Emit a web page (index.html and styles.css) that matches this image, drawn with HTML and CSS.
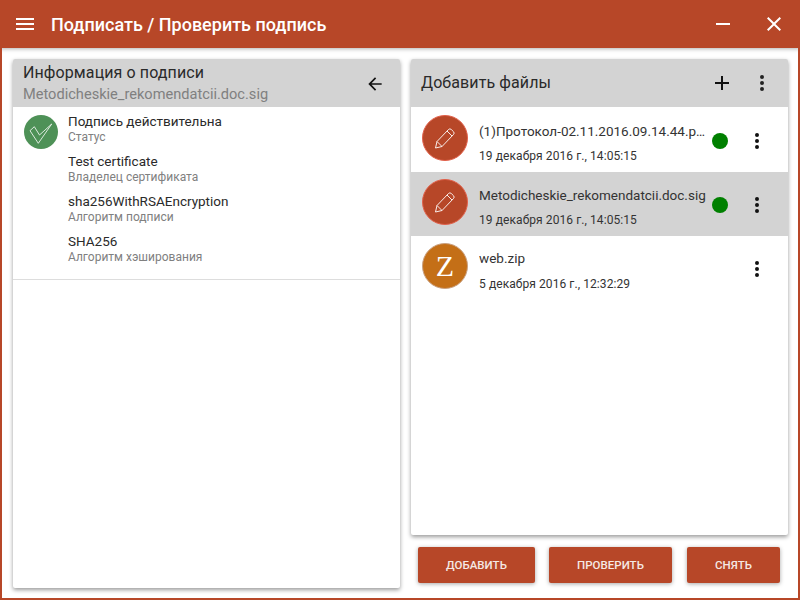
FILE: index.html
```html
<!DOCTYPE html>
<html lang="ru">
<head>
    <meta charset="UTF-8">
    <title>Подписать / Проверить подпись</title>
    <link rel="stylesheet" href="styles.css">
</head>
<body>
<div class="window">
    <header class="titlebar">
        <svg class="bar-icon menu-icon" width="24" height="24" viewBox="0 0 24 24"><path d="M3 18h18v-2H3v2zm0-5h18v-2H3v2zm0-7v2h18V6H3z"/></svg>
        <h1 class="app-title">Подписать / Проверить подпись</h1>
        <svg class="bar-icon min-icon" width="24" height="24" viewBox="0 0 24 24"><path d="M5 11h14v2H5z"/></svg>
        <svg class="bar-icon close-icon" width="24" height="24" viewBox="0 0 24 24"><path d="M19 6.400 17.600 5 12 10.600 6.400 5 5 6.400 10.600 12 5 17.600 6.400 19 12 13.400 17.600 19 19 17.600 13.400 12z"/></svg>
    </header>

    <main class="content">
        <section class="card card-left">
            <div class="card-head">
                <div class="head-text">
                    <div class="head-title">Информация о подписи</div>
                    <div class="head-sub">Metodicheskie_rekomendatcii.doc.sig</div>
                </div>
                <svg class="back-icon" width="20" height="20" viewBox="0 0 24 24"><path d="M20 11H7.800l5.600-5.600L12 4l-8 8 8 8 1.400-1.400L7.800 13H20z"/></svg>
            </div>
            <div class="info">
                <div class="info-row">
                    <div class="status-icon">
                        <svg width="34" height="34" viewBox="0 0 34 34"><path d="M6 15.700l4.300-4 5.200 8.300L27.700 9 14.300 28.300z" fill="none" stroke="#fff" stroke-width="0.800"/></svg>
                    </div>
                    <div class="info-title">Подпись действительна</div>
                    <div class="info-sub">Статус</div>
                </div>
                <div class="info-row">
                    <div class="info-title">Test certificate</div>
                    <div class="info-sub">Владелец сертификата</div>
                </div>
                <div class="info-row">
                    <div class="info-title">sha256WithRSAEncryption</div>
                    <div class="info-sub">Алгоритм подписи</div>
                </div>
                <div class="info-row">
                    <div class="info-title">SHA256</div>
                    <div class="info-sub">Алгоритм хэширования</div>
                </div>
            </div>
        </section>

        <div class="right-col">
            <section class="card card-right">
                <div class="card-head files-head">
                    <div class="head-title">Добавить файлы</div>
                    <svg class="head-plus" width="24" height="24" viewBox="0 0 24 24"><path d="M19 13h-6v6h-2v-6H5v-2h6V5h2v6h6z"/></svg>
                    <svg class="head-more" width="24" height="24" viewBox="0 0 24 24"><path d="M12 8a2 2 0 1 0 0-4 2 2 0 0 0 0 4zm0 2a2 2 0 1 0 0 4 2 2 0 0 0 0-4zm0 6a2 2 0 1 0 0 4 2 2 0 0 0 0-4z"/></svg>
                </div>
                <div class="files">
                    <div class="file">
                        <div class="avatar avatar-sign">
                            <svg width="26" height="26" viewBox="0 0 26 26"><path d="M3.500 23l1.500-6.500L16.500 4.500a2 2 0 0 1 2.800 0l2.200 2.200a2 2 0 0 1 0 2.800L10 21.500zM5 16.500l5 5M15 6l5 5" fill="none" stroke="#fff" stroke-width="0.900"/></svg>
                        </div>
                        <div class="file-text">
                            <div class="file-name">(1)Протокол-02.11.2016.09.14.44.pdf.sig</div>
                            <div class="file-date">19 декабря 2016 г., 14:05:15</div>
                        </div>
                        <div class="dot"></div>
                        <svg class="file-more" width="24" height="24" viewBox="0 0 24 24"><path d="M12 8a2 2 0 1 0 0-4 2 2 0 0 0 0 4zm0 2a2 2 0 1 0 0 4 2 2 0 0 0 0-4zm0 6a2 2 0 1 0 0 4 2 2 0 0 0 0-4z"/></svg>
                    </div>
                    <div class="file file-selected">
                        <div class="avatar avatar-sign">
                            <svg width="26" height="26" viewBox="0 0 26 26"><path d="M3.500 23l1.500-6.500L16.500 4.500a2 2 0 0 1 2.800 0l2.200 2.200a2 2 0 0 1 0 2.800L10 21.500zM5 16.500l5 5M15 6l5 5" fill="none" stroke="#fff" stroke-width="0.900"/></svg>
                        </div>
                        <div class="file-text">
                            <div class="file-name">Metodicheskie_rekomendatcii.doc.sig</div>
                            <div class="file-date">19 декабря 2016 г., 14:05:15</div>
                        </div>
                        <div class="dot"></div>
                        <svg class="file-more" width="24" height="24" viewBox="0 0 24 24"><path d="M12 8a2 2 0 1 0 0-4 2 2 0 0 0 0 4zm0 2a2 2 0 1 0 0 4 2 2 0 0 0 0-4zm0 6a2 2 0 1 0 0 4 2 2 0 0 0 0-4z"/></svg>
                    </div>
                    <div class="file">
                        <div class="avatar avatar-zip">Z</div>
                        <div class="file-text">
                            <div class="file-name file-name-short">web.zip</div>
                            <div class="file-date">5 декабря 2016 г., 12:32:29</div>
                        </div>
                        <div class="dot dot-none"></div>
                        <svg class="file-more" width="24" height="24" viewBox="0 0 24 24"><path d="M12 8a2 2 0 1 0 0-4 2 2 0 0 0 0 4zm0 2a2 2 0 1 0 0 4 2 2 0 0 0 0-4zm0 6a2 2 0 1 0 0 4 2 2 0 0 0 0-4z"/></svg>
                    </div>
                </div>
            </section>
            <div class="actions">
                <button class="btn btn-add">Добавить</button>
                <button class="btn btn-verify">Проверить</button>
                <button class="btn btn-remove">Снять</button>
            </div>
        </div>
    </main>
</div>
</body>
</html>
```

FILE: styles.css
```css
* {
    box-sizing: border-box;
}
html, body {
    margin: 0;
    height: 100%;
}
body {
    font-family: Roboto, "Liberation Sans", sans-serif;
    background: #fff;
    color: #212121;
}
.window {
    width: 800px;
    height: 600px;
    display: flex;
    flex-direction: column;
    border: 2px solid #b74728;
    border-top: 0;
    overflow: hidden;
}

/* top bar */
.titlebar {
    height: 48px;
    flex: none;
    margin: 0 -2px;
    padding: 0 14px 0 13px;
    display: flex;
    align-items: center;
    background: #b74728;
    color: #fff;
    box-shadow: 0 1px 4px rgba(0, 0, 0, .3);
    position: relative;
}
.bar-icon {
    fill: #fff;
    flex: none;
}
.app-title {
    margin: 0 0 0 14px;
    flex: 1;
    font-size: 18px;
    font-weight: 500;
}
.min-icon {
    margin-right: 27px;
}

.content {
    flex: 1;
    display: flex;
    gap: 11px;
    padding: 11px 10px 10px 11px;
    min-height: 0;
}
.card {
    background: #fff;
    box-shadow: 0 2px 4px rgba(0, 0, 0, .4);
    border-radius: 2px;
}
.card-left {
    width: 387px;
    flex: none;
}
.right-col {
    flex: 1;
    display: flex;
    flex-direction: column;
}
.card-right {
    flex: 1;
}

.card-head {
    height: 48px;
    display: flex;
    align-items: center;
    background: #d3d3d3;
    padding: 0 13px 0 10px;
    border-radius: 2px 2px 0 0;
}
.head-text {
    flex: 1;
}
.head-title {
    font-size: 16px;
    line-height: 20px;
    letter-spacing: .1px;
    color: #2a2a2a;
}
.head-sub {
    font-size: 14.600px;
    line-height: 20px;
    margin-top: 1px;
    color: #808080;
}
.files-head {
    padding-right: 14px;
}
.files-head .head-title {
    flex: 1;
}
.head-plus {
    margin-right: 16px;
    fill: #111;
}
.head-more {
    fill: #222;
}
.back-icon {
    fill: #111;
    margin: 2px 2px 0 0;
}

/* signature info */
.info {
    height: 173px;
    padding: 3px 0 0 55px;
    border-bottom: 1px solid #ddd;
}
.info-row {
    height: 40px;
    position: relative;
    padding-top: 2px;
}
.status-icon {
    position: absolute;
    left: -44px;
    top: 5px;
    width: 34px;
    height: 34px;
    border-radius: 50%;
    background: #4e9157;
}
.status-icon svg {
    display: block;
}
.info-title {
    font-size: 13.500px;
    line-height: 18px;
    color: #2a2a2a;
}
.info-sub {
    font-size: 12px;
    line-height: 14px;
    color: #808080;
}

/* file list */
.files {
    padding-top: 1px;
}
.file {
    height: 64px;
    display: flex;
    align-items: flex-start;
    padding: 0 19px 0 11px;
}
.file-selected {
    background: #d3d3d3;
}
.avatar {
    width: 46px;
    height: 46px;
    border-radius: 50%;
    flex: none;
    display: flex;
    align-items: center;
    justify-content: center;
    margin: 7px 11px 0 0;
}
.avatar-sign {
    background: #b74728;
    border: 1px solid #e2604a;
}
.avatar-zip {
    background: #c46f17;
    border: 1px solid #c9a080;
    color: #fff;
    font-family: "Liberation Serif", serif;
    font-size: 30px;
}
.file-text {
    flex: none;
    width: 233px;
    padding-right: 5px;
    min-width: 0;
}
.file-name {
    font-size: 13.500px;
    line-height: 18px;
    white-space: nowrap;
    overflow: hidden;
    text-overflow: ellipsis;
    color: #333;
    margin: 14px 0 8px;
}
.file-name-short {
    margin: 13px 0 9px;
}
.file-date {
    font-size: 12px;
    line-height: 16px;
    letter-spacing: .08px;
    color: #333;
}
.dot {
    width: 16px;
    height: 16px;
    flex: none;
    border-radius: 50%;
    background: #008000;
    margin-top: 25px;
}
.dot-none {
    background: none;
}
.file-more {
    flex: none;
    margin: 21px 0 0 17px;
    fill: #111;
}

/* buttons */
.actions {
    flex: none;
    height: 53px;
    display: flex;
    gap: 14px;
    padding: 12px 0 5px 7px;
}
.btn {
    height: 36px;
    border: 0;
    border-radius: 2px;
    background: #b74728;
    color: #f5e9e5;
    font-family: inherit;
    font-size: 11.500px;
    font-weight: 500;
    text-transform: uppercase;
    box-shadow: 0 1px 4px rgba(0, 0, 0, .35);
    padding: 0;
}
.btn-add {
    width: 117px;
}
.btn-verify {
    width: 123px;
}
.btn-remove {
    width: 93px;
    margin-left: 1px;
}
```
